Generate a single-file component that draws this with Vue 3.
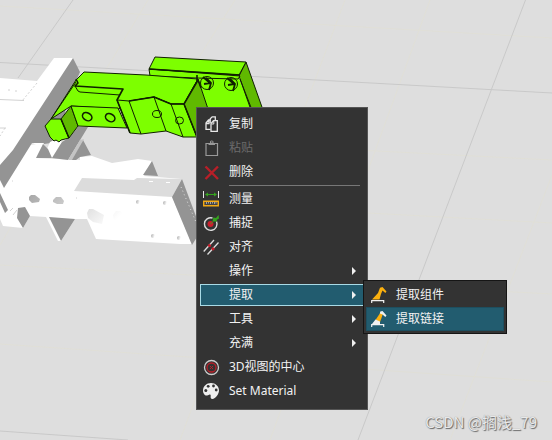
<script setup>
const groups = [
  [
    { label: '复制', icon: 'copy' },
    { label: '粘贴', icon: 'paste', disabled: true },
    { label: '删除', icon: 'delete' },
  ],
  [
    { label: '测量', icon: 'measure' },
    { label: '捕捉', icon: 'snap' },
    { label: '对齐', icon: 'align' },
    { label: '操作', more: true },
    {
      label: '提取',
      more: true,
      open: true,
      children: [
        { label: '提取组件', icon: 'arm' },
        { label: '提取链接', icon: 'armLink', active: true },
      ],
    },
    { label: '工具', more: true },
    { label: '充满', more: true },
    { label: '3D视图的中心', icon: 'center' },
    { label: 'Set Material', icon: 'palette' },
  ],
]

const icons = {
  copy: '<path d="M7.200 7V2.800L9.200 .8H12.300V4" fill="none" stroke="#e8e8e8" stroke-width="1.300"/><path d="M7.500 13.300H3V7L5.500 4H7.500M6 4.500V7.500H3.500" fill="none" stroke="#e8e8e8" stroke-width="1.300"/><path d="M8 15.300V7.500L10.500 4.700h3.800v10.600z" fill="#333" stroke="#e8e8e8" stroke-width="1.300"/><path d="M10.800 5v3H8.500" fill="none" stroke="#e8e8e8"/>',
  paste: '<path d="M3 3.500h11.500v12H3z" fill="none" stroke="#999" stroke-width="1.200"/><path d="M5.500 5V3H7V1.500Q8.700 -.5 10.500 1.500V3H12v2z" fill="#999"/><circle cx="8.800" cy="2" r=".8" fill="#333"/>',
  delete: '<path d="M2.500 2.500 15 15M15 2.500 2.500 15" fill="none" stroke="#b81f28" stroke-width="2.400"/>',
  measure: '<path d="M.5 0v7M15.500 0v7" stroke="#e8e8e8"/><path d="M3 3.500h10" stroke="#35a31e"/><path d="M2 3.500 5 1.500v4zM14 3.500l-3-2v4z" fill="#35a31e"/><path d="M.7 10.200h14.600v4.600H.7z" fill="#444" stroke="#f2a915" stroke-width="1.400"/><path d="M3.500 11v2M5.500 11v1.500M7.500 11v2M9.500 11v1.500M11.500 11v2M13 11v1.500" stroke="#bbb" stroke-width=".8"/>',
  snap: '<path d="M13.500 6.500A6.300 6.300 0 1 1 9.500 3" fill="none" stroke="#ddd" stroke-width="1.400"/><circle cx="7.500" cy="9" r="3" fill="#c91f2c"/><path d="M7.500 9 10 6.500" stroke="#35a31e"/><path d="m9.500 6.500.8-4L13 3l2.500-3 .5 3.500L13.500 5l.5 1.500z" fill="#35a31e"/>',
  align: '<path d="M.7 12.500 11 1M4.500 15.500 15.500 3.500" fill="none" stroke="#ddd" stroke-width="1.300"/><circle cx="6.500" cy="6.500" r="1.600" fill="#c91f2c"/><circle cx="10" cy="9.800" r="1.600" fill="#c91f2c"/>',
  center: '<circle cx="8.500" cy="8.500" r="7" fill="none" stroke="#ccc" stroke-width="1.300"/><circle cx="8.500" cy="8.500" r="4.500" fill="none" stroke="#b81f28" stroke-width="1.300"/><path d="m7 7 3 3M10 7l-3 3" stroke="#b81f28"/>',
  palette: '<path d="M8 0C3.500 0 0 3.400 0 7.500c0 3 2 5.500 4.200 5 1.500-.4 2-1.600 3-.9 1.300 1-.5 3 1.300 4.200 1.300.8 4-.6 5.500-3C15.300 11 16 9 16 7.500 16 3.400 12.500 0 8 0z" fill="#eee"/><g fill="#333"><circle cx="2.800" cy="7.500" r="1.500"/><circle cx="5.200" cy="3.300" r="1.400"/><circle cx="10.500" cy="3" r="1.400"/><circle cx="13.200" cy="7" r="1.400"/></g>',
  arm: '<path d="M1 12.500 7 6 9 .8 11.500 0 15.500 4.500 14.300 6 11.500 3.500 10 7 8.500 12.500z" fill="#fbb00f"/><path d="M.7 16v-2.300h12V16" fill="none" stroke="#f2f2f2" stroke-width="1.200"/>',
  armLink: '<path d="m4.500 9 5-7.500 2.300 1.500-1.300 4L9 11z" fill="#fbb00f"/><path d="M8.800 2.500 9.300 .5 11.500 0l4 4.500L14.300 6 11.500 3.500zM1 13 4.500 8.500 9 10.500V13z" fill="#f0f0f0"/><path d="M.7 16v-2.300h12V16" fill="none" stroke="#f2f2f2" stroke-width="1.200"/>',
}
</script>

<template>
  <main class="viewport">
    <svg class="scene" viewBox="0 0 552 440" preserveAspectRatio="xMinYMin slice" aria-hidden="true">
      <g fill="none" stroke="#e0dfd7">
        <path d="M0 6 552 38M0 265 552 294M0 344 552 382M148 0 0 245M235 0 196 62M345 0 180 440M430 0 270 440M552 175 450 440M260 145 552 160M368 213 552 223" />
      </g>
      <g fill="none" stroke="#c9c9c9">
        <path d="M73 0 18 78M0 62.500 552 93M525.500 0 358 440M0 431 128 440" />
      </g>

      <!-- lower gripper -->
      <path fill="#fff" d="M0 78 37 81 54 58 73 58 74 62 30 145 44 143 36 158 80 160 80 157 92 156 112 163 138 159 152 161 144 176 182 179 172 197 192 244 180 244 96 239 87 219 75 219 61 241 58 241 46 217 30 216 23 228 3 226 0 219z" />
      <path fill="#949494" d="M73 58 80 72 68 100 58 142 44 144 32 143 4 188 0 180V165L13 150z" />
      <path fill="#fff" d="M32 143 44 143 36 158 52 158 62 142 56 139 50 142 47 149z" />
      <path fill="#949494" d="M36 158 43 144 48 149 52 158zM52 158 62 142 70 137 78 127 88 127 68 160zM83 140 91 155 80 157 76 160 70 160z" />
      <path fill="#c4c4c4" d="m80 140 4-1-12 21h-4z" />
      <path fill="#949494" d="m152 161 6 15-15-1zM49 217l26 2-14 22zM18 208l7-1 5 9-7 12-6-10zM0 193l8 17-3 3-5-11z" />
      <path fill="#dcdcdc" d="m82 178 52 2 3-2 45 1-10 18-98-6z" />
      <path d="M149 181.500h4M166 182.500h4" stroke="#fff" />
      <path fill="#949494" d="m182 179 15 40v18l-5 8-20-48z" />
      <path d="m181 187 15 35" stroke="#ddd" stroke-dasharray="1 3" />
      <g stroke="#d2d2d2" fill="none">
        <path d="M0 99.500 24 100.500M0 128 6 128" />
        <path d="M8 90h2M15 91h2M37 83 22 101M5 128l-5 8M12 181h1M76 198h1" stroke-dasharray="2 2" />
        <path d="m10 211 3-3M13 215l4-5" />
      </g>
      <defs>
        <linearGradient id="bore" x1="0" x2="1" y1="0" y2=".3">
          <stop offset="0" stop-color="#a8a8a8" />
          <stop offset="1" stop-color="#fff" />
        </linearGradient>
      </defs>
      <g fill="url(#bore)">
        <path d="m29 197 2-2h4l5 4-1 3-7 1-3-3zM53 200l3-3h5l3 4-1 3-6 0-4-2zM87 213l2-4h4l11 6-2 9-9-2-5-4zM113 215l3-4h4l11 6-3 9-9-2-5-4z" />
        <circle cx="138" cy="202" r="2" /><circle cx="165" cy="203" r="2" />
        <circle cx="153" cy="236" r="2" /><circle cx="179" cy="238" r="2" />
      </g>

      <!-- selected upper gripper -->
      <g stroke="#102000" stroke-linejoin="round">
        <path fill="#7dff00" d="M198 78 238 76 252 110 208 110z" stroke="none" />
        <path fill="#60b900" d="m246 62 17 48h-12L239 76z" />
        <path d="m240 79 12 31" fill="none" />
        <path fill="#7dff00" d="m149 69 91 7-2 3-42-1-46-2z" />
        <path fill="#7dff00" d="m155 57 91 5-7 13-90-6z" />
        <path fill="#7dff00" d="M84 72 146 75 198 79 184 104 171 104 154 97 130 101 119 109 71 106 51 119 76 80z" />
        <path fill="#7dff00" d="m51 119-6 7 5 11 4 4 2-1 3 2 2-2 8-2-8-19z" />
        <path fill="#60b900" d="m71 106 7 20-9 12-8-19z" />
        <path fill="#7dff00" d="m71 106 47 2 9 20-49-2z" />
        <path fill="#7dff00" d="m117 100 12 1 25-4 17 7 13 0 13 33-14 0-17-6-25 3-11-1z" />
        <path fill="#60b900" d="m198 79 10 30-11 28-13-33z" />
        <path d="m129 101 12 33M154 97l12 34M171 104l12 33M76 82 51 119M75 86l3 5 2 1 40 3" fill="none" />
        <path d="m76 79 2 4-3 3 48 3-6 11 13 33M129 101l25-4 17 7h13l13 33M184 104l14-24 3 8M149 69l91 6M61 119l8 19M197 75v6" fill="none" stroke-width="1.600" />
        <g fill="none">
          <ellipse cx="87.500" cy="116.500" rx="5" ry="3.700" transform="rotate(30 87 116)" stroke-width="1.600" />
          <ellipse cx="110.500" cy="117.500" rx="5" ry="3.700" transform="rotate(30 110 117)" stroke-width="1.600" />
          <ellipse cx="157" cy="114" rx="4.500" ry="3.500" /><ellipse cx="179.500" cy="120.500" rx="4" ry="3.500" />
          <circle cx="207" cy="83" r="6.500" /><circle cx="231" cy="84" r="6.500" />
          <path d="m203 77 7 6-6 1M206 78l5 5-2 7M227 78l7 6-6 1M230 79l5 5-2 7" stroke-width="1.800" />
        </g>
      </g>
    </svg>

    <ul class="menu" role="menu">
      <template v-for="(group, g) in groups" :key="g">
        <li v-if="g > 0" class="separator" role="separator"></li>
        <li v-for="item in group" :key="item.label" class="entry" role="none">
          <button class="item" :class="{ open: item.open }" type="button" role="menuitem" :disabled="item.disabled">
            <svg class="icon" viewBox="0 0 16 16" aria-hidden="true" v-html="icons[item.icon] || ''"></svg>
            <span class="label">{{ item.label }}</span>
            <svg v-if="item.more" class="arrow" viewBox="0 0 4 8" aria-hidden="true"><path d="M0 0 4 4 0 8z" /></svg>
          </button>
          <ul v-if="item.children" class="submenu" role="menu">
            <li v-for="child in item.children" :key="child.label" role="none">
              <button class="subitem" :class="{ active: child.active }" type="button" role="menuitem">
                <svg class="icon" viewBox="0 0 16 16" aria-hidden="true" v-html="icons[child.icon]"></svg>
                <span class="label">{{ child.label }}</span>
              </button>
            </li>
          </ul>
        </li>
      </template>
    </ul>

    <p class="watermark">CSDN @搁浅_79</p>
  </main>
</template>

<style>
body {
  margin: 0;
  background: #dedede;
}
</style>

<style scoped>
.viewport {
  position: relative;
  min-height: 100vh;
  overflow: hidden;
  background: #dedede;
  font-family: "Noto Sans", "Noto Sans CJK SC", sans-serif;
  font-size: 12px;
}
.scene {
  position: absolute;
  inset: 0;
  width: 100%;
  height: 100%;
}
ul {
  margin: 0;
  padding: 0;
  list-style: none;
}
.menu {
  position: absolute;
  left: 196px;
  top: 107px;
  box-sizing: border-box;
  width: 172px;
  display: flex;
  flex-direction: column;
  gap: 2px;
  padding: 5px 3px 7px;
  border: 1px solid #555;
  background: #333;
}
.entry {
  position: relative;
}
.separator {
  height: 1px;
  margin: 0 4px 0 29px;
  background: #777;
}
button {
  box-sizing: border-box;
  width: 100%;
  display: flex;
  align-items: center;
  margin: 0;
  border: 1px solid transparent;
  background: transparent;
  color: #f2f2f2;
  font: inherit;
  text-align: left;
}
.item {
  height: 22px;
  gap: 10px;
  padding: 0 7px 0 2px;
}
.item:disabled {
  color: #6b6b6b;
}
.item.open {
  border-color: #a9dbe6;
  background: #225c6f;
}
.icon {
  flex: none;
  width: 16px;
  height: 16px;
  overflow: visible;
}
.label {
  flex: 1;
  line-height: 18px;
  white-space: nowrap;
}
.arrow {
  flex: none;
  width: 4px;
  height: 8px;
  fill: #f0f0f0;
}
.submenu {
  position: absolute;
  left: calc(100% - 1px);
  top: -4px;
  box-sizing: border-box;
  width: 144px;
  padding: 2px;
  border: 1px solid #151515;
  background: #333;
}
.subitem {
  height: 24px;
  gap: 9px;
  padding: 0 4px;
}
.subitem.active {
  border-color: #1d4f60;
  background: #225c6f;
}
.watermark {
  position: absolute;
  right: 15px;
  bottom: 7px;
  margin: 0;
  color: #e9e9e9;
  font-family: "Noto Sans CJK SC", sans-serif;
  font-size: 15px;
  line-height: 22px;
  text-shadow: 1px 1px 1px #666, 0 0 1px #888;
}
</style>
